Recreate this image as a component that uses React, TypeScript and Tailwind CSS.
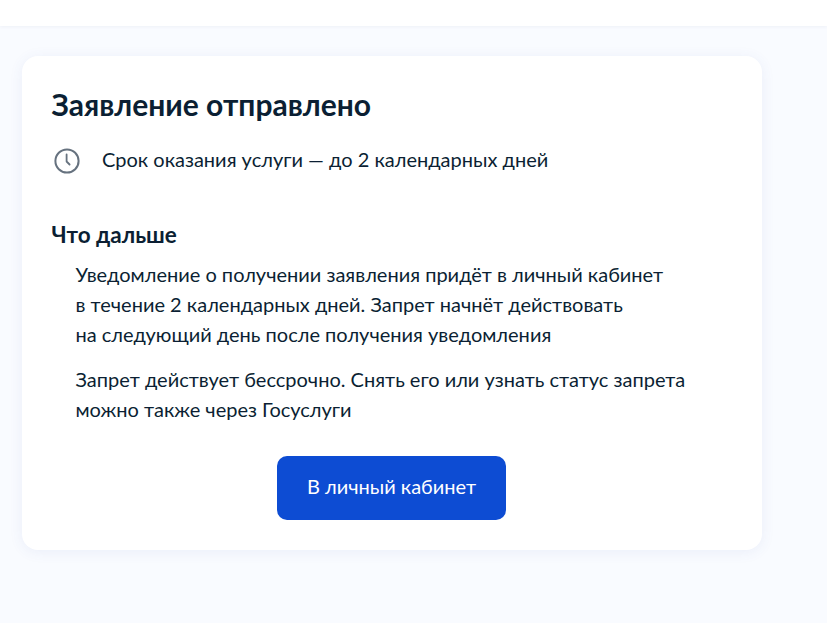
export default function App() {
  return (
    <div className="min-h-screen bg-[#f9fbff] font-['Lato',sans-serif] text-[#0b1f33]">
      <div className="h-[26px] bg-white shadow-[0_1px_3px_rgba(60,80,120,0.06)]" />
      <div className="pt-[30px] pl-[22px]">
        <div className="w-[740px] h-[494px] rounded-2xl bg-white pt-[30px] pl-[29.5px] pr-[29px] shadow-[0_2px_14px_rgba(60,90,180,0.08)]">
          <h1 className="text-[30px] leading-9 font-bold">Заявление отправлено</h1>
          <div className="mt-[26px] flex items-center h-6">
            <svg width="28" height="28" viewBox="0 0 28 28" fill="none" className="ml-[1.5px] mt-px shrink-0">
              <circle cx="14" cy="14" r="11.6" stroke="#66727f" strokeWidth="2" />
              <path d="M13.6 7.5V14.5L16.6 17.5" stroke="#66727f" strokeWidth="1.8" strokeLinecap="round" strokeLinejoin="round" />
            </svg>
            <p className="ml-[21px] pb-[2px] text-xl leading-6">Срок оказания услуги — до 2 календарных дней</p>
          </div>
          <h2 className="mt-[49px] text-[22.5px] leading-7 font-bold">Что дальше</h2>
          <div className="mt-[10px] pl-6 text-xl leading-[30px]">
            <p>
              Уведомление о получении заявления придёт в личный кабинет
              <br />
              в течение 2 календарных дней. Запрет начнёт действовать
              <br />
              на следующий день после получения уведомления
            </p>
            <p className="mt-[15px]">
              Запрет действует бессрочно. Снять его или узнать статус запрета
              <br />
              можно также через Госуслуги
            </p>
          </div>
          <div className="mt-8 flex justify-center">
            <button className="-ml-[1.5px] h-16 w-[229px] rounded-[10px] bg-[#0d4cd3] pb-[5px] text-xl text-white">В личный кабинет</button>
          </div>
        </div>
      </div>
    </div>
  );
}
